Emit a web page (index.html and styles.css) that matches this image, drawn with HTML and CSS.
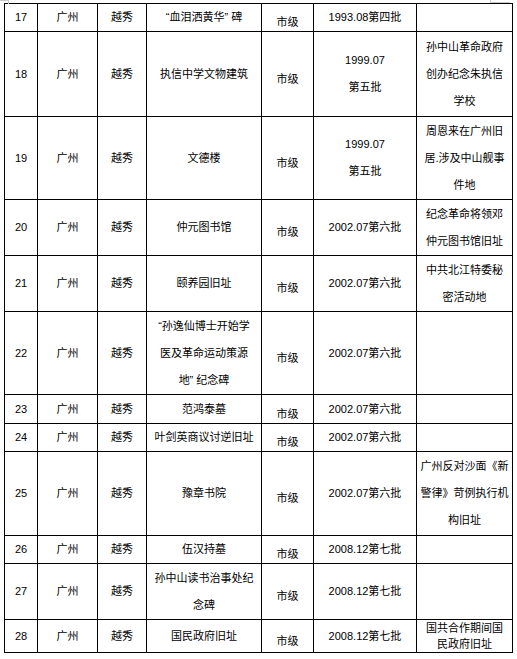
FILE: index.html
```html
<!DOCTYPE html>
<html lang="zh-CN">
<head>
<meta charset="utf-8">
<title>文物保护单位</title>
<link rel="stylesheet" href="styles.css">
</head>
<body>
<div class="page">
<span class="mark mark-tl"></span>
<span class="mark mark-tr"></span>
<table class="sites">
<colgroup>
<col class="c-no"><col class="c-city"><col class="c-dist"><col class="c-name"><col class="c-lvl"><col class="c-batch"><col class="c-note">
</colgroup>
<tbody>
<tr class="h28"><td>17</td><td>广州</td><td>越秀</td><td>“血泪洒黄华” 碑</td><td class="lvl">市级</td><td>1993.08第四批</td><td></td></tr>
<tr class="h85"><td>18</td><td>广州</td><td>越秀</td><td>执信中学文物建筑</td><td class="lvl">市级</td><td>1999.07<br>第五批</td><td>孙中山革命政府<br>创办纪念朱执信<br>学校</td></tr>
<tr class="h83"><td>19</td><td>广州</td><td>越秀</td><td>文德楼</td><td class="lvl">市级</td><td>1999.07<br>第五批</td><td>周恩来在广州旧<br>居.涉及中山舰事<br>件地</td></tr>
<tr class="h56"><td>20</td><td>广州</td><td>越秀</td><td>仲元图书馆</td><td class="lvl">市级</td><td>2002.07第六批</td><td>纪念革命将领邓<br>仲元图书馆旧址</td></tr>
<tr class="h56"><td>21</td><td>广州</td><td>越秀</td><td>颐养园旧址</td><td class="lvl">市级</td><td>2002.07第六批</td><td>中共北江特委秘<br>密活动地</td></tr>
<tr class="h83"><td>22</td><td>广州</td><td>越秀</td><td>“孙逸仙博士开始学<br>医及革命运动策源<br>地” 纪念碑</td><td class="lvl">市级</td><td>2002.07第六批</td><td></td></tr>
<tr class="h29"><td>23</td><td>广州</td><td>越秀</td><td>范鸿泰墓</td><td class="lvl">市级</td><td>2002.07第六批</td><td></td></tr>
<tr class="h28"><td>24</td><td>广州</td><td>越秀</td><td>叶剑英商议讨逆旧址</td><td class="lvl">市级</td><td>2002.07第六批</td><td></td></tr>
<tr class="h84"><td>25</td><td>广州</td><td>越秀</td><td>豫章书院</td><td class="lvl">市级</td><td>2002.07第六批</td><td>广州反对沙面《新<br>警律》苛例执行机<br>构旧址</td></tr>
<tr class="h28"><td>26</td><td>广州</td><td>越秀</td><td>伍汉持墓</td><td class="lvl">市级</td><td>2008.12第七批</td><td></td></tr>
<tr class="h56"><td>27</td><td>广州</td><td>越秀</td><td>孙中山读书治事处纪<br>念碑</td><td class="lvl">市级</td><td>2008.12第七批</td><td></td></tr>
<tr class="h33"><td>28</td><td>广州</td><td>越秀</td><td>国民政府旧址</td><td class="lvl">市级</td><td>2008.12第七批</td><td class="tight">国共合作期间国<br>民政府旧址</td></tr>
</tbody>
</table>
</div>
</body>
</html>
```
FILE: styles.css
```css
html, body {
  margin: 0;
  padding: 0;
  background: #fff;
}
.page {
  position: relative;
  padding: 3px 0 0 4px;
}
.mark {
  position: absolute;
  border-color: #c8c8c8;
  border-style: solid;
}
.mark-tl {
  left: 0;
  top: 0;
  width: 8px;
  height: 3px;
  border-width: 1px 1px 0 0;
}
.mark-tr {
  left: 490px;
  top: 0;
  width: 19px;
  height: 2px;
  border-width: 0 0 1px 1px;
}
.sites {
  border-collapse: collapse;
  table-layout: fixed;
  width: 508px;
  font-family: "Liberation Sans", "Noto Sans CJK SC", sans-serif;
  font-size: 11px;
  color: #000;
}
.c-no { width: 33px; }
.c-city { width: 60px; }
.c-dist { width: 49px; }
.c-name { width: 115px; }
.c-lvl { width: 52px; }
.c-batch { width: 103px; }
.c-note { width: 96px; }
.sites td {
  border: 1px solid #000;
  padding: 0;
  text-align: center;
  vertical-align: middle;
  line-height: 27px;
  white-space: nowrap;
}
.sites td.lvl {
  padding-top: 9px;
  line-height: 18px;
}
.sites td.tight {
  line-height: 16px;
}
.h28 { height: 28px; }
.h29 { height: 29px; }
.h33 { height: 33px; }
.h56 { height: 56px; }
.h83 { height: 83px; }
.h84 { height: 84px; }
.h85 { height: 85px; }
```
